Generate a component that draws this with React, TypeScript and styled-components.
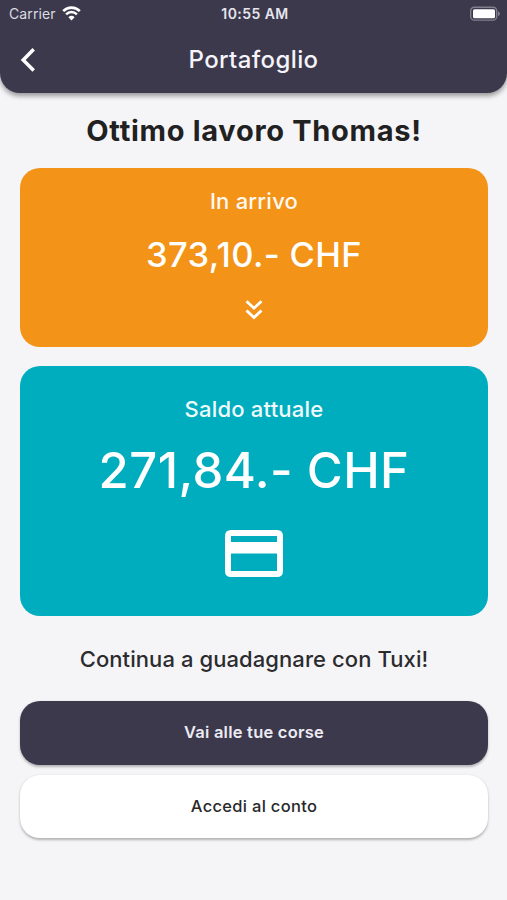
import React from 'react';
import styled, { createGlobalStyle } from 'styled-components';

const GlobalStyle = createGlobalStyle`
  * { box-sizing: border-box; }
  body {
    margin: 0;
    background: #f5f5f8;
    font-family: Inter, "Liberation Sans", sans-serif;
  }
`;

const Screen = styled.div`
  display: flex;
  flex-direction: column;
  width: 100%;
  height: 900px;
  overflow: hidden;
  background: #f5f5f8;
  color: #212122;
`;

const Header = styled.header`
  flex: none;
  height: 93px;
  border-radius: 0 0 20px 20px;
  background: #3c394c;
  color: #f5f4fb;
  box-shadow: 0 2.5px 5px rgba(0, 0, 0, 0.38);
`;

const StatusBar = styled.div`
  display: grid;
  grid-template-columns: 1fr auto 1fr;
  align-items: center;
  height: 27px;
  padding: 0 6px 0 9px;
`;

const Carrier = styled.div`
  display: flex;
  align-items: center;
  gap: 6px;
  font-size: 14px;
  letter-spacing: 0.1px;
  color: #dcdbe3;
`;

const Clock = styled.time`
  font-size: 14px;
  font-weight: 600;
  letter-spacing: 0.45px;
  line-height: 26px;
  color: #e6e5ed;
`;

const BatterySlot = styled.div`
  display: flex;
  justify-content: flex-end;
`;

const NavBar = styled.nav`
  display: grid;
  grid-template-columns: 40px 1fr 40px;
  align-items: center;
  height: 65px;
  padding: 0 12px 0 20px;
`;

const BackButton = styled.button`
  display: flex;
  padding: 0;
  border: 0;
  background: none;
  color: #fff;
`;

const NavTitle = styled.h1`
  margin: 0 0 0 -8px;
  text-align: center;
  font-size: 24px;
  font-weight: 500;
  letter-spacing: 0.38px;
`;

const Content = styled.main`
  display: flex;
  flex-direction: column;
  padding: 0 19px 0 20px;
`;

const Greeting = styled.h2`
  margin: 0;
  height: 75px;
  line-height: 76px;
  text-align: center;
  font-size: 29px;
  font-weight: 650;
  letter-spacing: 0.7px;
`;

const BalanceCard = styled.section<{ $tone: 'incoming' | 'current' }>`
  display: flex;
  flex-direction: column;
  align-items: center;
  height: ${({ $tone }) => ($tone === 'incoming' ? 178.5 : 250)}px;
  margin-bottom: ${({ $tone }) => ($tone === 'incoming' ? 19.5 : 0)}px;
  padding-top: ${({ $tone }) => ($tone === 'incoming' ? 17.5 : 27.5)}px;
  border-radius: 20px;
  background: ${({ $tone }) => ($tone === 'incoming' ? '#f39318' : '#00adbf')};
  color: #fff;
`;

const CardLabel = styled.div`
  font-size: 22px;
  font-weight: 500;
  line-height: 30px;
  letter-spacing: 0.22px;
  opacity: 0.94;
`;

const Amount = styled.div<{ $large?: boolean }>`
  font-size: ${({ $large }) => ($large ? 49 : 34.5)}px;
  font-weight: 500;
  line-height: ${({ $large }) => ($large ? 94 : 77)}px;
  letter-spacing: ${({ $large }) => ($large ? 0.45 : 0.35)}px;
  white-space: nowrap;
`;

const CardIcon = styled.div<{ $offset: number }>`
  display: flex;
  margin-top: ${({ $offset }) => $offset}px;
`;

const Encouragement = styled.p`
  margin: 0;
  height: 85px;
  line-height: 86px;
  text-align: center;
  font-size: 22px;
  font-weight: 500;
  letter-spacing: 0.08px;
  color: #2c2c2e;
`;

const Actions = styled.div`
  display: grid;
  gap: 10px;
`;

const ActionButton = styled.button<{ $primary?: boolean }>`
  height: 63.5px;
  padding: 0 0 1px;
  border: 0;
  border-radius: 20px;
  background: ${({ $primary }) => ($primary ? '#3c394c' : '#fff')};
  color: ${({ $primary }) => ($primary ? '#ecebf3' : '#29292a')};
  box-shadow: 0 1.5px 2.5px rgba(0, 0, 0, 0.27);
  font-family: inherit;
  font-size: 16.5px;
  font-weight: ${({ $primary }) => ($primary ? 600 : 500)};
  letter-spacing: ${({ $primary }) => ($primary ? 0.23 : 0.3)}px;
`;

const WifiIcon = () => (
  <svg width="19" height="15" viewBox="0 0 19 15" fill="none" stroke="#fff">
    <path d="M1.2 5.1 C5.9 0.4 13.1 0.4 17.8 5.1" strokeWidth="2.7" />
    <path d="M4.1 8.3 C7.1 5.3 11.9 5.3 14.9 8.3" strokeWidth="2.4" />
    <path d="M6.4 11.2 C8.2 9.4 10.8 9.4 12.6 11.2 L9.5 14.4 Z" fill="#fff" stroke="none" />
  </svg>
);

const BatteryIcon = () => (
  <svg width="32" height="16" viewBox="0 0 32 16">
    <rect x="1.7" y="1.2" width="26" height="12.9" rx="3.6" fill="none" stroke="#817f8c" strokeWidth="1.4" />
    <rect x="4" y="3.2" width="22" height="9" rx="1.5" fill="#fff" />
    <path d="M29 5.2 C31.6 6.3 31.6 9 29 10.1 Z" fill="#817f8c" />
  </svg>
);

const BackIcon = () => (
  <svg width="16" height="26" viewBox="0 0 16 26" fill="none" stroke="currentColor" strokeWidth="3.5">
    <path d="M13.7 2.2 L3.2 12.9 L13.7 23.6" />
  </svg>
);

const DoubleChevronIcon = () => (
  <svg width="18" height="22" viewBox="0 0 18 22" fill="none" stroke="#fff" strokeWidth="2.8">
    <path d="M1.5 2.2 L9 9.2 L16.5 2.2" />
    <path d="M1.5 11.5 L9 18.5 L16.5 11.5" />
  </svg>
);

const BankCardIcon = () => (
  <svg width="58" height="47" viewBox="0 0 58 47">
    <path
      fill="#fff"
      fillRule="evenodd"
      d="M6 0H52Q58 0 58 6V41Q58 47 52 47H6Q0 47 0 41V6Q0 0 6 0ZM6 6V12H52V6ZM6 23.5V41H52V23.5Z"
    />
  </svg>
);

export default function App() {
  return (
    <>
      <GlobalStyle />
      <Screen>
        <Header>
          <StatusBar>
            <Carrier>
              Carrier
              <WifiIcon />
            </Carrier>
            <Clock>10:55 AM</Clock>
            <BatterySlot>
              <BatteryIcon />
            </BatterySlot>
          </StatusBar>
          <NavBar>
            <BackButton aria-label="Indietro">
              <BackIcon />
            </BackButton>
            <NavTitle>Portafoglio</NavTitle>
          </NavBar>
        </Header>
        <Content>
          <Greeting>Ottimo lavoro Thomas!</Greeting>
          <BalanceCard $tone="incoming">
            <CardLabel>In arrivo</CardLabel>
            <Amount>373,10.- CHF</Amount>
            <CardIcon $offset={6.5}>
              <DoubleChevronIcon />
            </CardIcon>
          </BalanceCard>
          <BalanceCard $tone="current">
            <CardLabel>Saldo attuale</CardLabel>
            <Amount $large>271,84.- CHF</Amount>
            <CardIcon $offset={12}>
              <BankCardIcon />
            </CardIcon>
          </BalanceCard>
          <Encouragement>Continua a guadagnare con Tuxi!</Encouragement>
          <Actions>
            <ActionButton $primary>Vai alle tue corse</ActionButton>
            <ActionButton>Accedi al conto</ActionButton>
          </Actions>
        </Content>
      </Screen>
    </>
  );
}
